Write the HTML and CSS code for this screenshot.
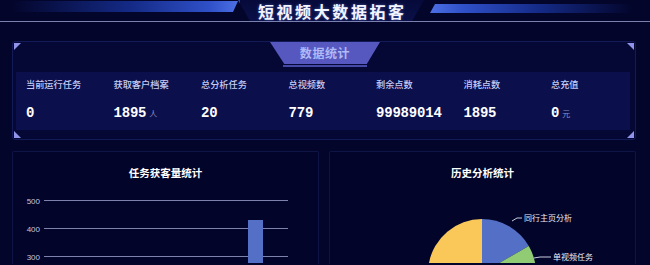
FILE: index.html
```html
<!DOCTYPE html>
<html lang="zh">
<head>
<meta charset="utf-8">
<title>短视频大数据拓客</title>
<link rel="stylesheet" href="styles.css">
</head>
<body>
<header class="top">
  <div class="bar bar-left"></div>
  <div class="title-wrap"><h1 class="title">短视频大数据拓客</h1></div>
  <div class="bar bar-right"></div>
</header>
<main class="content">
  <section class="panel">
    <span class="corner tl"></span>
    <span class="corner tr"></span>
    <span class="corner bl"></span>
    <span class="corner br"></span>
    <div class="tab">
      <div class="tab-shape">数据统计</div>
      <div class="tab-line"></div>
    </div>
    <div class="stats">
      <div class="stat"><div class="label">当前运行任务</div><div class="value">0</div></div>
      <div class="stat"><div class="label">获取客户档案</div><div class="value">1895<span class="unit">人</span></div></div>
      <div class="stat"><div class="label">总分析任务</div><div class="value">20</div></div>
      <div class="stat"><div class="label">总视频数</div><div class="value">779</div></div>
      <div class="stat"><div class="label">剩余点数</div><div class="value">99989014</div></div>
      <div class="stat"><div class="label">消耗点数</div><div class="value">1895</div></div>
      <div class="stat"><div class="label">总充值</div><div class="value">0<span class="unit">元</span></div></div>
    </div>
  </section>
  <div class="cards">
    <section class="card">
      <h2 class="card-title">任务获客量统计</h2>
      <svg class="chart" width="305" height="82" viewBox="0 0 305 82">
        <g class="grid">
          <line x1="31" y1="19.5" x2="275" y2="19.5"/>
          <line x1="31" y1="47.5" x2="275" y2="47.5"/>
          <line x1="31" y1="75.5" x2="275" y2="75.5"/>
        </g>
        <g class="axis">
          <text x="27" y="22.5">500</text>
          <text x="27" y="50.5">400</text>
          <text x="27" y="78.5">300</text>
        </g>
        <rect class="bar-rect" x="235" y="39" width="15" height="50"/>
      </svg>
    </section>
    <section class="card">
      <h2 class="card-title">历史分析统计</h2>
      <svg class="chart" width="305" height="82" viewBox="0 0 305 82">
        <path fill="#5470c6" d="M152,92 L152,38 A54,54 0 0 1 198.77,65 Z"/>
        <path fill="#91cc75" d="M152,92 L198.77,65 A54,54 0 0 1 205.97,93.88 Z"/>
        <path fill="#ee6666" d="M152,92 L205.97,93.88 A54,54 0 0 1 133.53,142.74 Z"/>
        <path fill="#fac858" d="M152,92 L133.53,142.74 A54,54 0 0 1 152,38 Z"/>
        <polyline class="leader" points="182,40 187,37 192,37"/>
        <polyline class="leader" points="204,77 210,76 221,76"/>
        <text class="pie-label" x="194" y="40">同行主页分析</text>
        <text class="pie-label" x="223" y="79">单视频任务</text>
      </svg>
    </section>
  </div>
</main>
</body>
</html>
```
FILE: styles.css
```css
* { box-sizing: border-box; }
html, body { margin: 0; padding: 0; }
body {
  width: 650px;
  height: 265px;
  overflow: hidden;
  background: #03052b;
  font-family: "Noto Sans CJK SC", "Noto Sans", sans-serif;
  color: #fff;
}

/* header */
.top {
  display: flex;
  align-items: flex-start;
  height: 22px;
  border-bottom: 1px solid #7a80ad;
}
.bar {
  height: 11px;
  margin-top: 1px;
}
.bar-left {
  width: 238px;
  background: linear-gradient(to right, rgba(20,35,120,0) 5%, #142a86 55%, #2f50c8 88%, #4d70e6 100%);
  clip-path: polygon(0 0, 100% 0, calc(100% - 5px) 100%, 0 100%);
}
.bar-right {
  flex: 1;
  margin-top: 4px;
  height: 9px;
  background: linear-gradient(to left, rgba(20,35,120,0) 8%, #142a86 50%, #2f50c8 85%, #4d70e6 100%);
  clip-path: polygon(5px 0, 100% 0, 100% 100%, 0 100%);
  margin-left: 6px;
}
.title-wrap {
  position: relative;
  width: 186px;
  height: 21px;
  padding-top: 2px;
  display: flex;
  justify-content: center;
  isolation: isolate;
}
.title-wrap::before {
  content: "";
  position: absolute;
  inset: 0;
  z-index: -1;
  background: linear-gradient(to bottom, #060a3a, #0a1048);
  clip-path: polygon(0 0, 100% 0, calc(100% - 12px) 100%, 12px 100%);
  border-left: 2px solid #2a46b0;
}
.title {
  margin: 0;
  font-size: 16px;
  line-height: 19px;
  font-weight: bold;
  letter-spacing: 2.6px;
  padding-left: 2.6px;
  color: #f2f4ff;
  text-shadow: 0 0 3px rgba(140,160,255,0.5);
  white-space: nowrap;
}

/* content */
.content {
  padding: 19px 14px 0 12px;
}
.panel {
  position: relative;
  height: 99px;
  border: 1px solid #131a58;
  border-radius: 3px;
  background: #050834;
  padding: 0 5px 0 3px;
  display: flex;
  flex-direction: column;
}
.corner {
  position: absolute;
  width: 7px;
  height: 7px;
  background: #9193ea;
}
.corner.tl { top: 1px; left: 1px; clip-path: polygon(0 0, 100% 0, 0 100%); }
.corner.tr { top: 1px; right: 1px; clip-path: polygon(0 0, 100% 0, 100% 100%); }
.corner.bl { bottom: 1px; left: 1px; clip-path: polygon(0 0, 100% 100%, 0 100%); }
.corner.br { bottom: 1px; right: 1px; clip-path: polygon(100% 0, 100% 100%, 0 100%); }

.tab {
  display: flex;
  flex-direction: column;
  align-items: center;
  margin-left: 4px;
}
.tab-shape {
  width: 110px;
  height: 22px;
  background: #5658c0;
  clip-path: polygon(0 0, 100% 0, 88% 100%, 13% 100%);
  color: #b0b8f6;
  font-size: 12px;
  font-weight: bold;
  letter-spacing: 0.6px;
  line-height: 21px;
  text-align: center;
}
.tab-line {
  width: 84px;
  height: 2px;
  margin-top: 1px;
  background: #4549a8;
}

.stats {
  margin-top: 5px;
  height: 58px;
  background: #0b104d;
  display: grid;
  grid-template-columns: repeat(7, 87.5px);
  padding: 5px 0 0 10px;
}
.label {
  font-size: 9.2px;
  line-height: 14px;
  font-weight: 500;
  color: #c6ccf6;
  white-space: nowrap;
}
.value {
  margin-top: 13px;
  font-family: "Liberation Mono", "DejaVu Sans Mono", monospace;
  font-weight: bold;
  font-size: 14px;
  line-height: 18px;
  color: #ffffff;
  white-space: nowrap;
  letter-spacing: -0.2px;
}
.unit {
  font-family: "Noto Sans CJK SC", sans-serif;
  font-weight: normal;
  font-size: 8px;
  color: #8a92c4;
  margin-left: 3px;
}

/* cards */
.cards {
  margin-top: 11px;
  display: grid;
  grid-template-columns: 307px 307px;
  gap: 10px;
}
.card {
  height: 113px;
  border: 1px solid #0e1446;
  border-bottom: 0;
  border-radius: 2px 2px 0 0;
  background: #02042a;
  padding-top: 13px;
  overflow: hidden;
}
.card-title {
  margin: 0;
  text-align: center;
  font-size: 10.5px;
  line-height: 16px;
  font-weight: bold;
  color: #ffffff;
}
.chart { display: block; overflow: hidden; }
.grid line { stroke: #7c82ab; stroke-width: 1; }
.axis text {
  font-family: "Liberation Sans", Arial, sans-serif;
  font-size: 8px;
  fill: #c4c8e0;
  text-anchor: end;
}
.bar-rect { fill: #5470c6; }
.leader { fill: none; stroke: #c8cce0; stroke-width: 1; }
.pie-label {
  font-family: "Noto Sans CJK SC", sans-serif;
  font-size: 8px;
  fill: #eceef8;
}
```
